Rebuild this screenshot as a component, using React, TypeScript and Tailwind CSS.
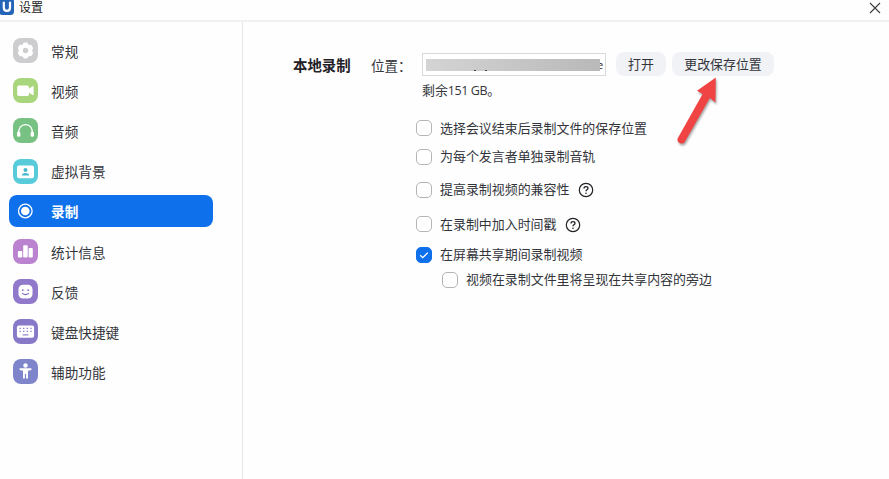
import type { ReactNode } from "react";
import clsx from "clsx";

type NavItem = {
  label: string;
  color: string;
  icon: ReactNode;
  active?: boolean;
};

// every glyph is drawn on the 25x25 tile it sits on
const nav: NavItem[] = [
  {
    label: "常规",
    color: "bg-[#cdcdcf]",
    icon: (
      <>
        <g fill="#fff">
          <circle cx="12.5" cy="12.5" r="6.8" />
          <rect x="9.8" y="4.6" width="5.4" height="15.8" rx="1.8" />
          <rect x="9.8" y="4.6" width="5.4" height="15.8" rx="1.8" transform="rotate(60 12.5 12.5)" />
          <rect x="9.8" y="4.6" width="5.4" height="15.8" rx="1.8" transform="rotate(120 12.5 12.5)" />
        </g>
        <circle cx="12.5" cy="12.5" r="2.7" fill="#cdcdcf" />
      </>
    ),
  },
  {
    label: "视频",
    color: "bg-[#a9d67c]",
    icon: (
      <g fill="#fff">
        <rect x="4.2" y="7.4" width="11.8" height="10.6" rx="1.8" />
        <path d="M15 11.2 L19.6 8.2 Q20.6 7.7 20.6 8.9 V16.3 Q20.6 17.5 19.6 17 L15 14 Z" />
      </g>
    ),
  },
  {
    label: "音频",
    color: "bg-[#77c283]",
    icon: (
      <>
        <path
          d="M5.4 16.5 C5.4 10 8 6.6 12.5 6.6 C17 6.6 19.6 10 19.6 16.5"
          fill="none"
          stroke="#fff"
          strokeWidth="1.3"
        />
        <rect x="4" y="13.6" width="3.4" height="5.2" rx="1.5" fill="#fff" />
        <rect x="17.6" y="13.6" width="3.4" height="5.2" rx="1.5" fill="#fff" />
      </>
    ),
  },
  {
    label: "虚拟背景",
    color: "bg-[#58cbdb]",
    icon: (
      <>
        <rect x="4" y="6.4" width="17" height="12.8" rx="2" fill="#fff" />
        <circle cx="12.5" cy="11" r="2" fill="#45b9cb" />
        <path d="M8.8 16.6 Q9 13.9 12.5 13.9 Q16 13.9 16.2 16.6 Z" fill="#45b9cb" />
      </>
    ),
  },
  {
    label: "录制",
    color: "bg-transparent",
    active: true,
    icon: (
      <>
        <circle cx="12.3" cy="12" r="6.8" fill="none" stroke="#fff" strokeWidth="1.3" />
        <circle cx="12.3" cy="12" r="4.3" fill="#fff" />
      </>
    ),
  },
  {
    label: "统计信息",
    color: "bg-[#bb82cf]",
    icon: (
      <g fill="#fff">
        <rect x="4.9" y="12" width="4.4" height="6.4" rx="1" />
        <rect x="10.2" y="6.2" width="4.5" height="12.2" rx="1" />
        <rect x="15.6" y="9" width="4.2" height="9.4" rx="1" />
      </g>
    ),
  },
  {
    label: "反馈",
    color: "bg-[#9078ca]",
    icon: (
      <>
        <rect x="5.5" y="5.7" width="14" height="13.8" rx="4.6" fill="#fff" />
        <circle cx="9.8" cy="11.1" r="0.9" fill="#8068c0" />
        <circle cx="15.2" cy="11.1" r="0.9" fill="#8068c0" />
        <path d="M9.2 14.2 Q12.5 17.2 15.8 14.2" fill="none" stroke="#8068c0" strokeWidth="1.1" />
      </>
    ),
  },
  {
    label: "键盘快捷键",
    color: "bg-[#8878c8]",
    icon: (
      <>
        <rect x="3.9" y="6.5" width="17.2" height="12.3" rx="2" fill="#fff" />
        <path
          d="M6.5 9.4 H19 M6.5 12.3 H19"
          stroke="#8878c8"
          strokeWidth="1.2"
          strokeDasharray="1.3 2.3"
        />
        <path d="M9.6 15.9 H15.4" stroke="#8878c8" strokeWidth="1.1" />
      </>
    ),
  },
  {
    label: "辅助功能",
    color: "bg-[#7f85ca]",
    icon: (
      <g fill="#fff">
        <circle cx="12.5" cy="6.5" r="2.2" />
        <path d="M6.6 9.3 H18.4 V10.9 L15 11.7 V19.6 H13.1 V15 H11.9 V19.6 H10 V11.7 L6.6 10.9 Z" />
      </g>
    ),
  },
];

type Option = {
  label: string;
  height: string;
  checked?: boolean;
  help?: boolean;
  nested?: boolean;
};

const options: Option[] = [
  { label: "选择会议结束后录制文件的保存位置", height: "h-[28px]" },
  { label: "为每个发言者单独录制音轨", height: "h-[29px]" },
  { label: "提高录制视频的兼容性", height: "h-[37px]", help: true },
  { label: "在录制中加入时间戳", height: "h-[32px]", help: true },
  { label: "在屏幕共享期间录制视频", height: "h-[29px]", checked: true },
  { label: "视频在录制文件里将呈现在共享内容的旁边", height: "h-[21px]", nested: true },
];

function Checkbox({ checked }: { checked?: boolean }) {
  return (
    <span
      className={clsx(
        "flex h-4 w-4 shrink-0 items-center justify-center rounded-[5px] border",
        checked ? "border-[#0e71eb] bg-[#0e71eb]" : "border-[#b4b4b8] bg-white"
      )}
    >
      {checked && (
        <svg viewBox="0 0 12 12" className="h-3 w-3 shrink-0">
          <path d="M2.2 6.2 L4.8 8.7 L9.8 3.6" fill="none" stroke="#fff" strokeWidth="1.3" />
        </svg>
      )}
    </span>
  );
}

function HelpIcon() {
  return (
    <svg viewBox="0 0 16 16" className="mt-px ml-[8.5px] h-4 w-4 shrink-0" fill="none" stroke="#222226">
      <circle cx="8" cy="8" r="6.7" strokeWidth="1.2" />
      <path
        d="M6 6.5 Q6 4.7 8 4.7 Q10 4.7 10 6.3 Q10 7.2 8.9 7.8 Q8 8.3 8 9.3"
        strokeWidth="1.3"
      />
      <circle cx="8" cy="11.2" r="0.8" fill="#222226" stroke="none" />
    </svg>
  );
}

function Sidebar() {
  return (
    <nav className="w-[243px] shrink-0 border-r border-[#e6e6e8] pt-[8.6px] pr-[29px] pl-[9px]">
      {nav.map((item) => (
        <div key={item.label} className="flex h-[40.15px] items-center">
          <div
            className={clsx(
              "flex h-[32.5px] w-full items-center rounded-[8px] pl-1 text-[13.65px]",
              item.active ? "bg-[#0e71eb] font-bold text-white" : "text-[#33353b]"
            )}
          >
            <span className={clsx("h-[25px] w-[25px] shrink-0 rounded-[8px]", item.color)}>
              <svg viewBox="0 0 25 25" className="h-full w-full">
                {item.icon}
              </svg>
            </span>
            <span className="mt-0.5 ml-[13px] leading-none">{item.label}</span>
          </div>
        </div>
      ))}
    </nav>
  );
}

export default function App() {
  return (
    <div className="relative flex h-[479px] w-[889px] flex-col overflow-hidden bg-[#fefefe] font-['Open_Sans','Noto_Sans_CJK_SC',sans-serif] text-[#33353b]">
      <header className="flex h-[22px] shrink-0 items-center justify-between border-b-2 border-[#f0f1f1] pr-2">
        <div className="flex h-full items-start">
          <svg viewBox="0 0 15 15" className="-ml-px h-[15px] w-[15px]">
            <rect y="-2" width="15" height="17" rx="3.5" fill="#2565b8" />
            <path
              d="M4.8 1.8 V7.4 Q4.8 10.8 7.9 10.8 Q11 10.8 11 7.4 V1.8"
              fill="none"
              stroke="#fff"
              strokeWidth="2.2"
            />
          </svg>
          <span className="mt-[2px] ml-[5px] text-[12px] leading-none text-[#222]">设置</span>
        </div>
        <svg viewBox="0 0 12 12" className="mt-[-5px] h-3 w-3" stroke="#3c3c3c" strokeWidth="1.1">
          <path d="M1 1 L11 11 M11 1 L1 11" />
        </svg>
      </header>

      <div className="flex min-h-0 flex-1">
        <Sidebar />

        <main className="flex-1 pt-[30px] pl-[50px]">
          <div className="flex h-6 items-center leading-none">
            <span className="w-[78px] pt-[5px] text-[14.4px] font-bold text-[#1f2126]">本地录制</span>
            <span className="w-[51px] pt-[5px] text-[13.5px]">位置：</span>
            <div className="flex h-[23px] w-[184px] items-center border border-[#d9d9db] bg-white pl-[3px]">
              <span className="relative z-10 mt-px flex h-3 w-[174px] shrink-0 items-end gap-[9px] bg-linear-to-r from-[#d4d4d4] to-[#b9b9b9] pl-[48px]">
                <i className="h-px w-[2px] bg-[#444]" />
                <i className="h-px w-[2px] bg-[#444]" />
              </span>
              <span className="-ml-[3px] pt-px text-[11px] text-[#222]">e</span>
            </div>
            <button className="ml-[10px] flex h-6 w-[50px] items-center justify-center rounded-[8px] bg-[#f1f2f5] text-[12.9px]">
              打开
            </button>
            <button className="ml-[6px] flex h-6 w-[102px] items-center justify-center rounded-[8px] bg-[#f1f2f5] text-[12.9px]">
              更改保存位置
            </button>
          </div>
          <p className="mt-[7px] pl-[129px] text-[12.9px] leading-[14px]">
            剩余<span className="text-[12.5px] tracking-[-0.4px]">151 GB</span>。
          </p>

          <div className="mt-[16px] pl-[123px]">
            {options.map((o) => (
              <div
                key={o.label}
                className={clsx("flex items-center text-[12.95px] leading-none", o.height, o.nested && "pl-[26px]")}
              >
                <Checkbox checked={o.checked} />
                <span className="ml-2">{o.label}</span>
                {o.help && <HelpIcon />}
              </div>
            ))}
          </div>
        </main>
      </div>

      {/* pointer over the change-location button */}
      <svg
        viewBox="0 0 48 76"
        className="absolute top-[74px] left-[674px] h-[76px] w-[48px] drop-shadow-[1px_2px_1px_rgba(0,0,0,0.35)]"
      >
        <path
          d="M41.8 3.6 L23 16.8 L28.6 20 L3.6 64.4 Q2.9 67.6 5.6 69 Q8.6 70.4 10.6 68.2 L35.8 24 L41.4 28.4 Z"
          fill="#f04343"
        />
      </svg>
    </div>
  );
}
